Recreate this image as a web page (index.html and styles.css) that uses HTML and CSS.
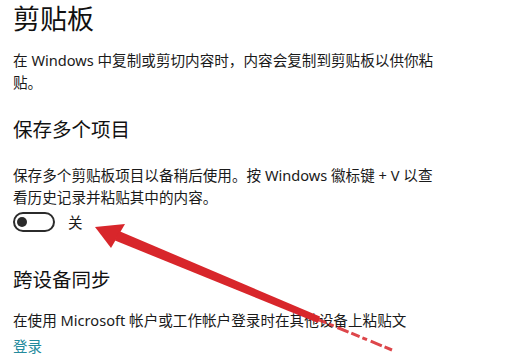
FILE: index.html
```html
<!DOCTYPE html>
<html lang="zh-CN">
<head>
  <meta charset="utf-8">
  <meta name="viewport" content="width=device-width, initial-scale=1">
  <title>剪贴板</title>
  <link rel="stylesheet" href="styles.css">
</head>
<body>
  <div class="page">
    <h1 class="title">剪贴板</h1>
    <p class="desc first">在 Windows 中复制或剪切内容时，内容会复制到剪贴板以供你粘贴。</p>

    <h2 class="section">保存多个项目</h2>
    <p class="desc">保存多个剪贴板项目以备稍后使用。按 Windows 徽标键 + V 以查看历史记录并粘贴其中的内容。</p>
    <div class="toggleRow">
      <span class="toggle"><span class="knob"></span></span>
      <span class="state">关</span>
    </div>

    <h2 class="section sync">跨设备同步</h2>
    <p class="desc tight">在使用 Microsoft 帐户或工作帐户登录时在其他设备上粘贴文</p>
    <a class="link" href="#">登录</a>

    <svg class="arrow" width="520" height="357" viewBox="0 0 520 357">
      <polygon points="95,227 125,224 111,248" fill="#d8262b"/>
      <polygon points="119,231 115,240.5 318,323 320,316.5" fill="#d8262b"/>
      <line x1="318" y1="319.5" x2="392" y2="350" stroke="#d8262b" stroke-width="3" stroke-dasharray="9 3 5 4 12 3" opacity="0.85"/>
    </svg>
  </div>
</body>
</html>
```

FILE: styles.css
```css
body {
  margin: 0;
  background: #fff;
  color: #1a1a1a;
  font-family: "Noto Sans", "Noto Sans CJK SC", sans-serif;
}
.page {
  position: relative;
  width: 520px;
  height: 357px;
  padding-left: 13px;
  box-sizing: border-box;
  overflow: hidden;
}
.title {
  margin: 0;
  padding-top: 1px;
  font-size: 27px;
  font-weight: normal;
  line-height: 36px;
  color: #111;
}
.desc {
  margin: 0;
  width: 430px;
  font-size: 14.6px;
  line-height: 22px;
}
.desc.first {
  margin-top: 12px;
}
.section {
  margin: 23px 0 0;
  font-size: 19.5px;
  font-weight: normal;
  line-height: 28px;
  color: #111;
}
.section + .desc {
  margin-top: 20px;
}
.sync {
  margin-top: 34px;
}
.desc.tight {
  margin-top: 15px;
}
.toggleRow {
  display: flex;
  align-items: center;
  gap: 13px;
  margin-top: 4px;
  height: 20px;
}
.toggle {
  display: flex;
  align-items: center;
  width: 42px;
  height: 20px;
  box-sizing: border-box;
  border: 2px solid #2b2b2b;
  border-radius: 10px;
  padding-left: 2px;
}
.knob {
  width: 10px;
  height: 10px;
  border-radius: 50%;
  background: #2b2b2b;
}
.state {
  font-size: 14.5px;
  line-height: 20px;
}
.link {
  display: block;
  margin-top: 4px;
  font-size: 14.5px;
  line-height: 22px;
  color: #238a9d;
  text-decoration: none;
}
.arrow {
  position: absolute;
  left: 0;
  top: 0;
  pointer-events: none;
}
```
